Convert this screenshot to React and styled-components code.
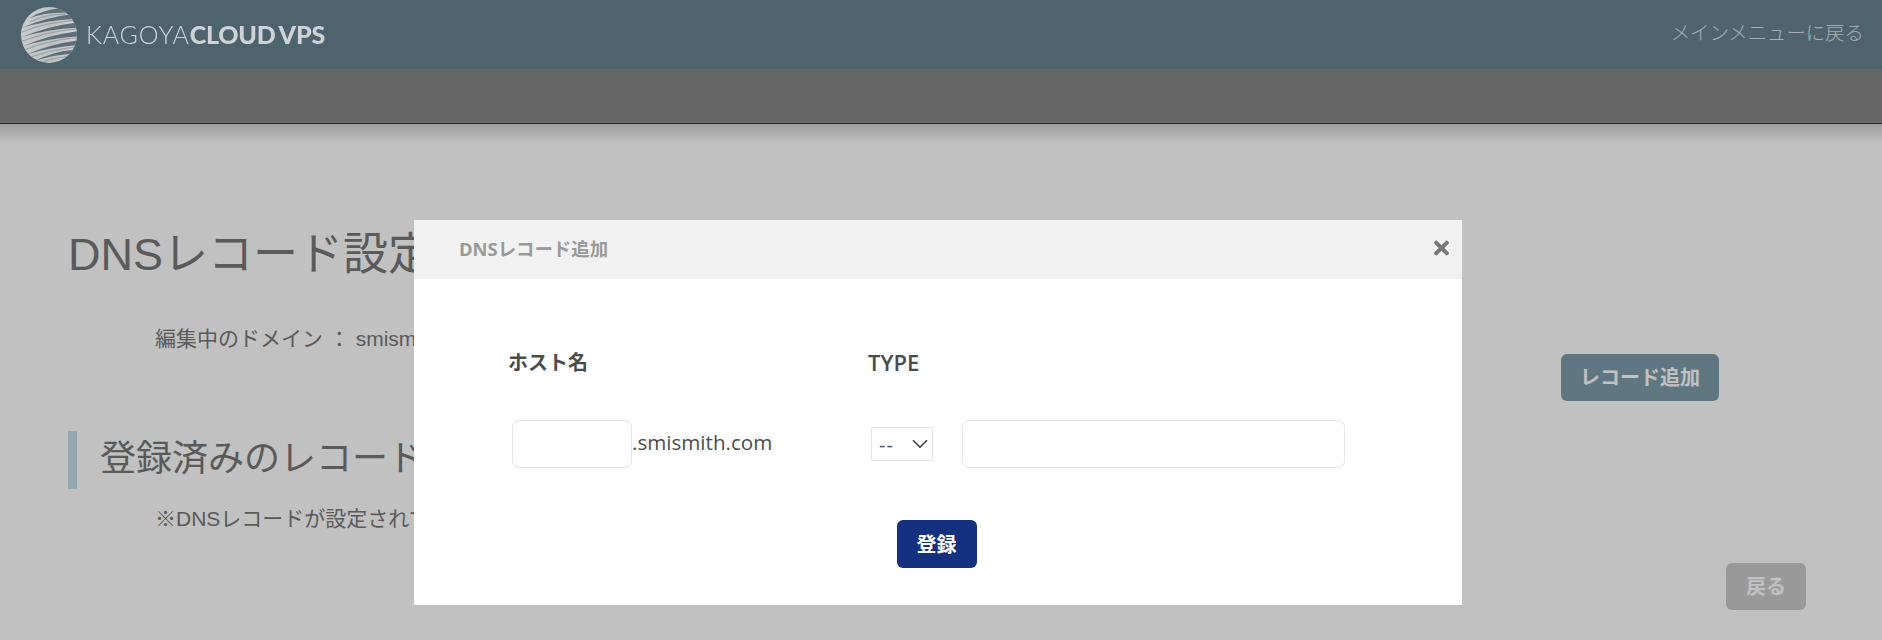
import React from "react";
import styled, { createGlobalStyle } from "styled-components";
import { FaTimes } from "react-icons/fa";
import { ChevronDown } from "lucide-react";

const GlobalStyle = createGlobalStyle`
  html, body {
    margin: 0;
    height: 640px;
    overflow: hidden;
    background: #fff;
  }
  body {
    font-family: "Liberation Sans", "Noto Sans CJK JP", sans-serif;
    color: #777;
  }
`;

const Header = styled.header`
  display: flex;
  align-items: center;
  justify-content: space-between;
  height: 69px;
  padding: 0 18px 0 20px;
  box-sizing: border-box;
  background: #668593;
`;

// the logo keeps its own lighter tone, above the dimming layer
const Logo = styled.div`
  position: relative;
  z-index: 2;
  display: flex;
  align-items: center;
  gap: 8px;
`;

const LogoText = styled.div`
  display: flex;
  margin-top: -2px;
  font-family: Lato, "Open Sans", sans-serif;
  font-size: 25px;
  color: #cfd3d5;
  letter-spacing: -0.2px;
`;

const LogoLight = styled.span`
  font-weight: 300;
  letter-spacing: 0.8px;
`;

const LogoBold = styled.span`
  font-weight: 900;
  margin-left: ${(p) => p.$gap || 0}px;
`;

const BackLink = styled.a`
  font-family: "Noto Sans CJK JP", sans-serif;
  font-size: 19.4px;
  font-weight: 300;
  color: #d8e6ee;
  margin-top: -7px;
`;

const SubBar = styled.div`
  height: 54px;
  background: #878787;
  border-bottom: 1px solid #3a3a3a;
`;

const Main = styled.main`
  padding: 0 76px 0 68px;
  background: linear-gradient(#cfcfcf, #fff 20px);
`;

const PageTitle = styled.h1`
  margin: 0;
  padding-top: 102px;
  font-size: 45px;
  line-height: 58px;
  font-weight: 400;
  white-space: nowrap;
`;

const InfoRow = styled.div`
  display: flex;
  justify-content: space-between;
  align-items: flex-start;
  height: 134px;
  padding-left: 87px;
  padding-right: 87px;
`;

const InfoText = styled.p`
  margin: 40px 0 0;
  font-size: 21px;
  line-height: 30px;
`;

const Button = styled.button`
  border: 0;
  border-radius: 6px;
  font-family: "Noto Sans CJK JP", sans-serif;
  font-weight: 700;
  color: ${(p) => p.$color || "#fff"};
  background: ${(p) => p.$bg};
  width: ${(p) => p.$width}px;
  height: ${(p) => p.$height}px;
  font-size: 20px;
  padding: 0 0 2px;
`;

const AddButton = styled(Button)`
  margin-top: 70px;
`;

const SectionTitle = styled.h2`
  margin: 13px 0 0;
  height: 58px;
  padding-left: 23px;
  border-left: 9px solid #c2dee7;
  font-size: 36px;
  line-height: 56px;
  font-weight: 400;
  white-space: nowrap;
`;

const Note = styled.p`
  margin: 15px 0 0 87px;
  font-size: 21px;
  line-height: 30px;
`;

const Footer = styled.div`
  display: flex;
  justify-content: flex-end;
  margin-top: 29px;
`;

const Overlay = styled.div`
  position: fixed;
  inset: 0;
  padding: 220px 0 0 414px;
  background: rgba(0, 0, 0, 0.243);
`;

const Modal = styled.div`
  width: 1048px;
  height: 385px;
  background: #fff;
  font-family: "Open Sans", "Noto Sans CJK JP", sans-serif;
  color: #4b4b4b;
`;

const ModalHead = styled.div`
  display: flex;
  align-items: center;
  justify-content: space-between;
  height: 59px;
  padding: 0 13px 3px 45px;
  box-sizing: border-box;
  background: #f1f1f1;
  color: #999;
  font-size: 18.4px;
  font-weight: 700;
`;

const CloseIcon = styled(FaTimes)`
  width: 15px;
  height: 24px;
  color: #777;
`;

const ModalBody = styled.form`
  padding: 69px 0 0 94px;
`;

const LabelRow = styled.div`
  display: grid;
  grid-template-columns: 360px auto;
  align-items: start;
  height: 30px;
  font-weight: 700;
`;

const Label = styled.span`
  font-size: ${(p) => p.$size}px;
  font-weight: ${(p) => p.$weight || 700};
  line-height: ${(p) => p.$line}px;
`;

const FieldRow = styled.div`
  display: flex;
  align-items: center;
  margin: 42px 0 0 4px;
`;

const HostGroup = styled.div`
  display: flex;
  align-items: center;
  width: 359px;
`;

const TextInput = styled.input`
  box-sizing: border-box;
  width: ${(p) => p.$width}px;
  height: 48px;
  border: 1px solid #e4e4e4;
  border-radius: 7px;
  background: #fff;
  margin: 0;
  padding: 0 8px;
`;

const Domain = styled.span`
  margin: -5px 0 0 0;
  font-size: 20.6px;
`;

const SelectWrap = styled.div`
  position: relative;
  margin-right: 29px;
  height: 34px;
`;

const TypeSelect = styled.select`
  display: block;
  box-sizing: border-box;
  width: 62px;
  height: 34px;
  padding: 0 0 0 7px;
  border: 1px solid #e4e4e4;
  border-radius: 0;
  appearance: none;
  background: #fff;
  color: #4b4b4b;
  font-family: "Open Sans", sans-serif;
  font-size: 20px;
  letter-spacing: 1px;
`;

const SelectArrow = styled(ChevronDown)`
  position: absolute;
  top: 4px;
  right: 0;
  color: #444;
  pointer-events: none;
`;

const SubmitRow = styled.div`
  display: flex;
  justify-content: center;
  margin: 52px 0 0 -94px;
  padding-right: 3px;
`;

// gaps between the globe's bands: [left x, y, right x, opening at the right]
const globeGaps = [
  [14, 6, 50, 5],
  [4, 14, 57, 5],
  [1, 23, 59, 5.5],
  [1, 32, 60, 5.5],
  [3, 41, 58, 5],
  [10, 49, 50, 4],
];

function LogoMark() {
  return (
    <svg width="58" height="58" viewBox="0 0 58 58">
      <defs>
        <clipPath id="globe">
          <circle cx="29" cy="29" r="28" />
        </clipPath>
        <linearGradient id="band" x1="0" x2="1" y1="0" y2="0">
          <stop offset="0" stopColor="#c9cbcc" />
          <stop offset="0.55" stopColor="#bfc2c3" />
          <stop offset="1" stopColor="#d2d4d5" />
        </linearGradient>
      </defs>
      <g clipPath="url(#globe)">
        <rect width="58" height="58" fill="url(#band)" />
        <g transform="rotate(-13 29 29)">
          {globeGaps.map(([x0, y, x1, w]) => (
            <g key={y}>
              <path
                d={`M${x0} ${y + 2} Q29 ${y - 3} ${x1} ${y} L${x1} ${y + w} Q30 ${y} ${x0} ${y + 2} Z`}
                fill="#5c6f79"
              />
              <path
                d={`M${x0} ${y + 6} Q29 ${y + 2} ${x1} ${y + 6.5}`}
                fill="none"
                stroke="#9ea2a4"
                strokeWidth="1.2"
              />
            </g>
          ))}
        </g>
      </g>
    </svg>
  );
}

function App() {
  return (
    <>
      <GlobalStyle />
      <Header>
        <Logo>
          <LogoMark />
          <LogoText>
            <LogoLight>KAGOYA</LogoLight>
            <LogoBold>CLOUD</LogoBold>
            <LogoBold $gap={3}>VPS</LogoBold>
          </LogoText>
        </Logo>
        <BackLink>メインメニューに戻る</BackLink>
      </Header>
      <SubBar />
      <Main>
        <PageTitle>DNSレコード設定</PageTitle>
        <InfoRow>
          <InfoText>編集中のドメイン ： smismith.com</InfoText>
          <AddButton $bg="#7d9eae" $width={158} $height={47}>
            レコード追加
          </AddButton>
        </InfoRow>
        <SectionTitle>登録済みのレコード</SectionTitle>
        <Note>※DNSレコードが設定されていません。</Note>
        <Footer>
          <Button $bg="#cacaca" $width={80} $height={47}>
            戻る
          </Button>
        </Footer>
      </Main>
      <Overlay>
        <Modal>
          <ModalHead>
            DNSレコード追加
            <CloseIcon />
          </ModalHead>
          <ModalBody>
            <LabelRow>
              <Label $size={20} $line={30}>ホスト名</Label>
              <Label $size={22} $weight={600} $line={28}>TYPE</Label>
            </LabelRow>
            <FieldRow>
              <HostGroup>
                <TextInput $width={120} />
                <Domain>.smismith.com</Domain>
              </HostGroup>
              <SelectWrap>
                <TypeSelect defaultValue="">
                  <option value="">--</option>
                  <option value="A">A</option>
                  <option value="CNAME">CNAME</option>
                </TypeSelect>
                <SelectArrow size={26} strokeWidth={1.6} />
              </SelectWrap>
              <TextInput $width={383} />
            </FieldRow>
            <SubmitRow>
              <Button $bg="#14307f" $width={80} $height={48}>
                登録
              </Button>
            </SubmitRow>
          </ModalBody>
        </Modal>
      </Overlay>
    </>
  );
}

export default App;
